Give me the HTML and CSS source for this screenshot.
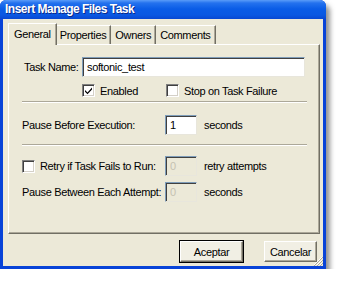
FILE: index.html
```html
<!DOCTYPE html>
<html>
<head>
<meta charset="utf-8">
<link rel="stylesheet" href="styles.css">
</head>
<body>
<div class="window">
  <div class="titlebar">Insert Manage Files Task</div>
  <div class="client">
    <div class="tabs">
      <div class="tab active">General</div>
      <div class="tab">Properties</div>
      <div class="tab">Owners</div>
      <div class="tab">Comments</div>
    </div>
    <div class="pane">
      <div class="row r-name">
        <span class="lbl-name">Task Name:</span>
        <div class="input wide">softonic_test</div>
      </div>
      <div class="row r-checks">
        <span class="check checked"><svg width="9" height="9" viewBox="0 0 9 9"><path d="M1 4 L3.5 6.5 L8 1.5 L8 3.5 L3.5 8.2 L1 5.8 Z" fill="#000"/></svg></span>
        <span class="ck-text">Enabled</span>
        <span class="check stop"></span>
        <span class="ck-text">Stop on Task Failure</span>
      </div>
      <div class="sep"></div>
      <div class="row r-pause">
        <span class="lbl-long">Pause Before Execution:</span>
        <div class="input small">1</div>
        <span class="unit">seconds</span>
      </div>
      <div class="sep sep2"></div>
      <div class="row r-retry">
        <span class="lbl-long retry"><span class="check"></span><span class="retry-text">Retry if Task Fails to Run:</span></span>
        <div class="input small disabled">0</div>
        <span class="unit">retry attempts</span>
      </div>
      <div class="row r-between">
        <span class="lbl-long">Pause Between Each Attempt:</span>
        <div class="input small disabled">0</div>
        <span class="unit">seconds</span>
      </div>
    </div>
    <div class="buttons">
      <button class="btn default">Aceptar</button>
      <button class="btn">Cancelar</button>
    </div>
    <svg class="grip" width="10" height="10" viewBox="0 0 10 10">
      <path d="M9 1 L1 9 M9 4 L4 9 M9 7 L7 9" stroke="#fff" stroke-width="1"/>
      <path d="M10 1 L1 10 M10 4 L4 10 M10 7 L7 10" stroke="#aca899" stroke-width="1"/>
    </svg>
  </div>
</div>
</body>
</html>
```

FILE: styles.css
```css
html, body {
  margin: 0;
  padding: 0;
  background: #ffffff;
}
body {
  font-family: "Liberation Sans", Arial, sans-serif;
  font-size: 11px;
  letter-spacing: -0.35px;
  white-space: nowrap;
  color: #000;
}
.window {
  width: 320px;
  border: 3px solid #0843d8;
  border-top: 0;
  border-radius: 6px 6px 0 0;
  box-shadow: 4px 5px 5px rgba(60, 60, 60, 0.55);
  background: #0843d8;
  margin: 0;
}
.titlebar {
  height: 19px;
  margin: 0 -3px;
  padding-left: 5px;
  line-height: 19px;
  color: #fff;
  font-weight: bold;
  font-size: 12px;
  letter-spacing: -0.5px;
  border-radius: 6px 6px 0 0;
  background: linear-gradient(#5a9cf8 0px, #2472ee 3px, #0a5ce6 9px, #0a58e2 15px, #0848d2 19px);
  text-shadow: 1px 1px 0 #0a2a8a;
}
.client {
  position: relative;
  background: #ece9d8;
  height: 244px;
  padding: 3px 3px 0 5px;
}
.tabs {
  display: flex;
  align-items: flex-end;
  height: 22px;
  padding-left: 2px;
  position: relative;
  z-index: 1;
}
.tab {
  height: 18px;
  line-height: 18px;
  padding: 0 4px;
  background: #ece9d8;
  border-top: 1px solid #fff;
  border-left: 1px solid #fff;
  border-right: 1px solid #716f64;
  box-shadow: inset -1px 0 0 #aca899;
}
.tab + .tab { border-left: 0; }
.tab.active {
  height: 21px;
  line-height: 21px;
  padding: 0 5px;
  margin-bottom: -1px;
  border-left: 1px solid #fff;
  position: relative;
  margin-left: -2px;
  margin-right: -1px;
  z-index: 2;
}
.pane {
  border-top: 1px solid #fff;
  border-left: 1px solid #fff;
  border-right: 1px solid #716f64;
  border-bottom: 1px solid #716f64;
  box-shadow: inset -1px -1px 0 #aca899;
  padding: 12px 0 0 13px;
  box-sizing: border-box;
  height: 190px;
  width: 312px;
}
.row {
  display: flex;
  align-items: center;
}
.lbl-name {
  width: 58px;
  padding-left: 2px;
}
.input {
  height: 20px;
  box-sizing: border-box;
  background: #fff;
  border-top: 1px solid #7f9db9;
  border-left: 1px solid #7f9db9;
  border-right: 1px solid #e8e6dc;
  border-bottom: 1px solid #e8e6dc;
  box-shadow: inset 1px 1px 0 #404040;
  padding: 2px 0 0 4px;
  line-height: 15px;
}
.input.wide { width: 223px; }
.input.small { width: 32px; }
.input.disabled {
  background: #ece9d8;
  color: #c5c2b2;
}
.r-checks {
  margin-top: 7px;
  height: 13px;
}
.check {
  width: 13px;
  height: 13px;
  box-sizing: border-box;
  background: #fff;
  border-top: 1px solid #808080;
  border-left: 1px solid #808080;
  border-right: 1px solid #fff;
  border-bottom: 1px solid #fff;
  box-shadow: inset 1px 1px 0 #404040, inset -1px -1px 0 #d4d0c8;
  display: inline-flex;
  align-items: center;
  justify-content: center;
  flex: none;
}
.r-checks .check:first-child { margin-left: 60px; }
.ck-text { margin-left: 5px; }
.ck-text:nth-child(2) { width: 66px; }
.sep {
  margin-top: 4px;
  width: 285px;
  border-top: 1px solid #aca899;
  border-bottom: 1px solid #fff;
}
.sep2 { margin-top: 9px; }
.r-pause { margin-top: 12px; }
.lbl-long {
  width: 143px;
  display: flex;
  align-items: center;
}
.unit { margin-left: 7px; }
.r-retry { margin-top: 10px; }
.retry-text { margin-left: 5px; }
.r-between { margin-top: 6px; }
.buttons {
  display: flex;
  justify-content: flex-end;
  gap: 21px;
  padding: 7px 3px 0 0;
}
.btn {
  font-family: "Liberation Sans", Arial, sans-serif;
  font-size: 11px;
  letter-spacing: -0.35px;
  color: #000;
  height: 21px;
  padding: 0;
  background: #f1efe4;
  border-top: 1px solid #fff;
  border-left: 1px solid #fff;
  border-right: 1px solid #716f64;
  border-bottom: 1px solid #716f64;
  box-shadow: inset -1px -1px 0 #aca899;
  width: 53px;
}
.btn.default {
  width: 63px;
  outline: 1px solid #000;
  outline-offset: 0;
}
.grip {
  position: absolute;
  right: 0;
  bottom: 0;
}
```
